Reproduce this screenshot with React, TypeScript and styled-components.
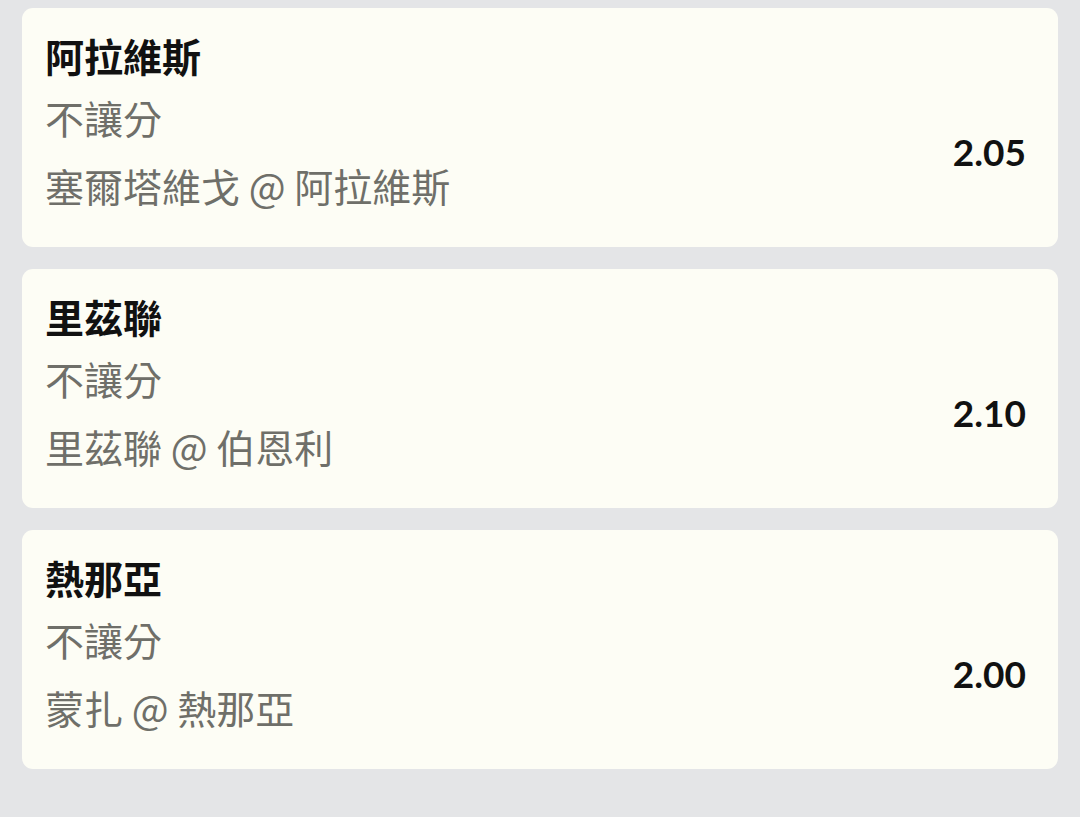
import styled, { createGlobalStyle } from "styled-components";

type betProps = {
  team: string;
  market: string;
  match: string;
  odds: string;
};

const GlobalStyle = createGlobalStyle`
  body {
    margin: 0;
    background: #e4e5e7;
    font-family: Lato, "Noto Sans CJK TC", sans-serif;
  }
`;

const Page = styled.div`
  display: flex;
  flex-direction: column;
  gap: 22px;
  padding: 8px 22px;
  min-height: 817px;
  box-sizing: border-box;
`;

const Card = styled.div`
  background: #fdfdf5;
  border-radius: 11px;
  padding: 21px 32px 36px 23px;
  display: flex;
  flex-direction: column;
`;

const Team = styled.div`
  font-family: "Noto Sans CJK TC", sans-serif;
  font-size: 39px;
  font-weight: 700;
  line-height: 52px;
  color: #111111;
  margin-bottom: 10px;
`;

const Body = styled.div`
  display: flex;
  align-items: center;
`;

const Lines = styled.div`
  flex: 1;
  display: flex;
  flex-direction: column;
  gap: 16px;
`;

const Line = styled.div`
  font-family: "Noto Sans CJK TC", sans-serif;
  font-size: 39px;
  line-height: 52px;
  color: #6f6f69;
`;

const Odds = styled.div`
  font-size: 37px;
  font-weight: 700;
  color: #111111;
`;

const BetCard = (props: betProps) => {
  return (
    <Card>
      <Team>{props.team}</Team>
      <Body>
        <Lines>
          <Line>{props.market}</Line>
          <Line>{props.match}</Line>
        </Lines>
        <Odds>{props.odds}</Odds>
      </Body>
    </Card>
  );
};

const bets: betProps[] = [
  { team: "阿拉維斯", market: "不讓分", match: "塞爾塔維戈 @ 阿拉維斯", odds: "2.05" },
  { team: "里茲聯", market: "不讓分", match: "里茲聯 @ 伯恩利", odds: "2.10" },
  { team: "熱那亞", market: "不讓分", match: "蒙扎 @ 熱那亞", odds: "2.00" },
];

const App = () => {
  return (
    <>
      <GlobalStyle />
      <Page>
        {bets.map((b) => (
          <BetCard key={b.team} {...b} />
        ))}
      </Page>
    </>
  );
};

export default App;
